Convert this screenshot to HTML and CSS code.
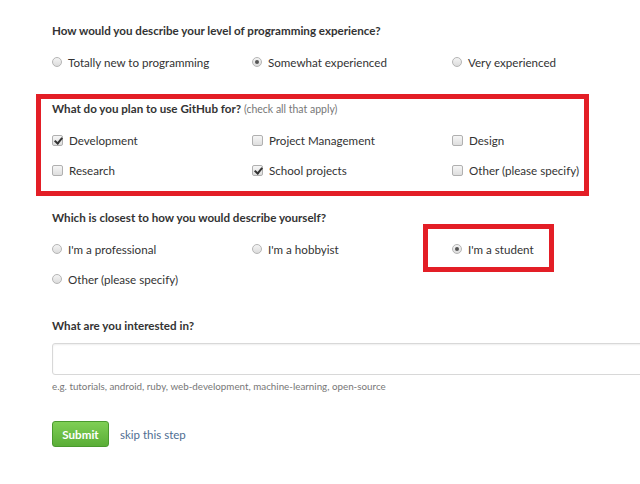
FILE: index.html
```html
<!DOCTYPE html>
<html>
<head>
<meta charset="utf-8">
<link rel="stylesheet" href="styles.css">
</head>
<body>
<div class="page">
  <section class="question">
    <h3 class="title">How would you describe your level of programming experience?</h3>
    <div class="options">
      <label class="opt"><span class="radio"></span>Totally new to programming</label>
      <label class="opt"><span class="radio on"></span>Somewhat experienced</label>
      <label class="opt"><span class="radio"></span>Very experienced</label>
    </div>
  </section>

  <section class="question wide">
    <h3 class="title">What do you plan to use GitHub for? <span class="note">(check all that apply)</span></h3>
    <div class="options">
      <label class="opt"><span class="check on"></span>Development</label>
      <label class="opt"><span class="check"></span>Project Management</label>
      <label class="opt"><span class="check"></span>Design</label>
      <label class="opt"><span class="check"></span>Research</label>
      <label class="opt"><span class="check on"></span>School projects</label>
      <label class="opt"><span class="check"></span>Other (please specify)</label>
    </div>
  </section>

  <section class="question">
    <h3 class="title">Which is closest to how you would describe yourself?</h3>
    <div class="options">
      <label class="opt"><span class="radio"></span>I'm a professional</label>
      <label class="opt"><span class="radio"></span>I'm a hobbyist</label>
      <label class="opt"><span class="radio on"></span>I'm a student</label>
      <label class="opt"><span class="radio"></span>Other (please specify)</label>
    </div>
  </section>

  <section class="question last">
    <h3 class="title">What are you interested in?</h3>
    <div class="field"></div>
    <p class="hint">e.g. tutorials, android, ruby, web-development, machine-learning, open-source</p>
    <div class="actions">
      <button class="submit">Submit</button>
      <a class="skip" href="#">skip this step</a>
    </div>
  </section>

  <div class="mark mark-a"></div>
  <div class="mark mark-b"></div>
</div>
</body>
</html>
```
FILE: styles.css
```css
* { box-sizing: border-box; }
html, body { margin: 0; padding: 0; background: #fff; }
body {
  font-family: Lato, "Noto Sans", "DejaVu Sans", sans-serif;
  color: #333;
  width: 640px;
  height: 484px;
  overflow: hidden;
}
.page {
  position: relative;
  padding: 21px 0 0 52px;
  height: 484px;
}
.question { margin-bottom: 22px; }
.question.wide { margin-bottom: 23px; }
.title {
  margin: 0 0 6px 0;
  height: 20px;
  line-height: 20px;
  font-size: 11.6px;
  font-weight: 700;
  color: #333;
}
.note { font-weight: 400; font-size: 10.5px; color: #777; }
.options {
  display: grid;
  grid-template-columns: 200px 200px 200px;
  grid-auto-rows: 30px;
}
.opt {
  display: flex;
  align-items: center;
  gap: 6px;
  font-size: 11.6px;
  color: #333;
}
.radio {
  width: 10px; height: 10px;
  border-radius: 50%;
  border: 1px solid #b5b5b5;
  background: linear-gradient(#f4f4f4, #dcdcdc);
  display: flex; align-items: center; justify-content: center;
  flex: none;
}
.radio.on::after {
  content: "";
  width: 4px; height: 4px;
  border-radius: 50%;
  background: #555;
}
.check {
  width: 11px; height: 11px;
  border-radius: 2px;
  border: 1px solid #b0b0b0;
  background: linear-gradient(#f6f6f6, #dedede);
  position: relative;
  flex: none;
}
.check.on::after {
  content: "";
  position: absolute;
  left: 3px; top: 0px;
  width: 3px; height: 6px;
  border: solid #333;
  border-width: 0 2px 2px 0;
  transform: rotate(40deg);
}
.last .title { margin-bottom: 7px; }
.field {
  height: 32px;
  width: 620px;
  border: 1px solid #d8d8d8;
  border-radius: 3px;
  box-shadow: inset 0 1px 2px rgba(0,0,0,0.07);
  background: #fff;
}
.hint {
  margin: 3px 0 0 0;
  line-height: 16px;
  font-size: 9.8px;
  color: #777;
}
.actions {
  margin-top: 27px;
  display: flex;
  align-items: center;
  gap: 11px;
}
.submit {
  width: 57px; height: 26px;
  border: 1px solid #4a9a2e;
  border-radius: 3px;
  background: linear-gradient(#7fcf55, #5aae37);
  color: #fff;
  font-family: inherit;
  font-weight: 700;
  font-size: 11.6px;
  padding: 0;
}
.skip {
  font-size: 11.5px;
  color: #4e6d92;
  text-decoration: none;
}
.mark {
  position: absolute;
  border: 5px solid #e31e26;
}
.mark-a { left: 36px; top: 94px; width: 553px; height: 102px; }
.mark-b { left: 423px; top: 224px; width: 131px; height: 48px; }
```
